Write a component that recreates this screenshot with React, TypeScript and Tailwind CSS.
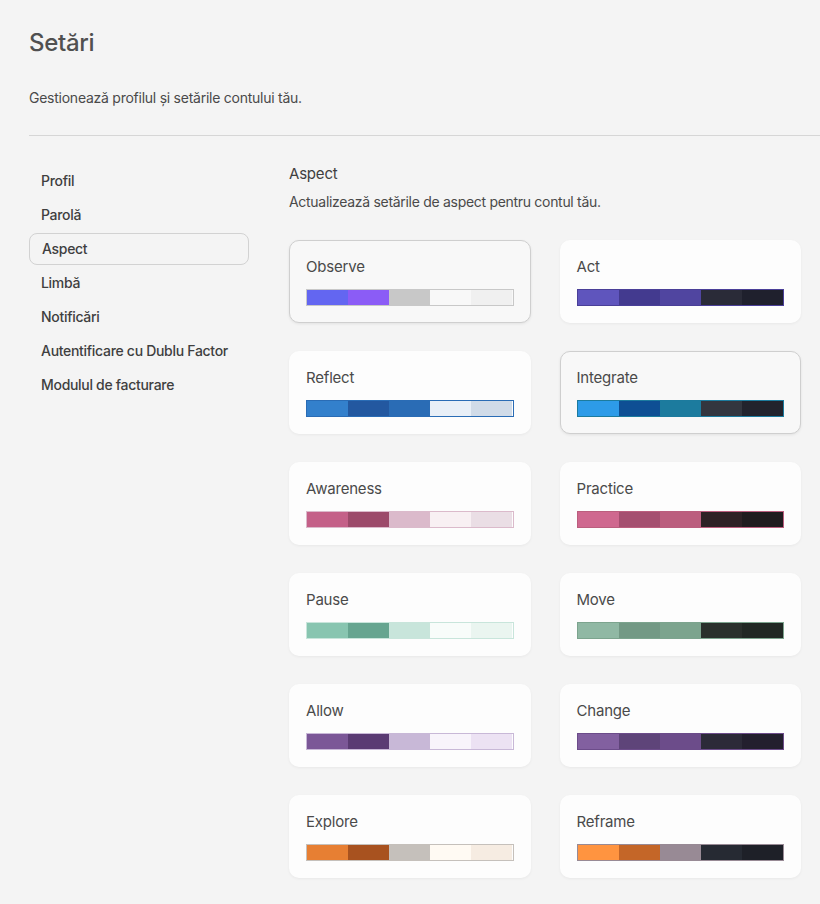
import React from "react";

type Theme = {
  name: string;
  colors: string[];
  border: string;
};

const themes: Theme[] = [
  { name: "Observe", colors: ["#6366f1", "#8b5cf6", "#c8c8c8", "#f8f8f8", "#f0f0f0"], border: "#c8c8c8" },
  { name: "Act", colors: ["#5f55bd", "#433a8f", "#5045a0", "#2a2b38", "#1f202d"], border: "#4a3f98" },
  { name: "Reflect", colors: ["#3380cc", "#2358a0", "#2a6cb5", "#e8eff7", "#d0dbe8"], border: "#2a6cb5" },
  { name: "Integrate", colors: ["#2d9be8", "#0e4f94", "#1c7b9e", "#33363f", "#22232d"], border: "#1c7b9e" },
  { name: "Awareness", colors: ["#c46088", "#9c4a6a", "#dbbacb", "#f8f0f3", "#eadee5"], border: "#dbbacb" },
  { name: "Practice", colors: ["#cf688f", "#a54f70", "#bb5e7e", "#2e2226", "#201c1f"], border: "#bb5e7e" },
  { name: "Pause", colors: ["#88c5b0", "#66a590", "#c8e5db", "#f8fcfa", "#eaf5f0"], border: "#c8e5db" },
  { name: "Move", colors: ["#90b8a4", "#739985", "#7ca48e", "#2a302c", "#212824"], border: "#7ca48e" },
  { name: "Allow", colors: ["#7b5797", "#5a3b73", "#c8b8d7", "#f8f4fb", "#ece2f3"], border: "#c8b8d7" },
  { name: "Change", colors: ["#8260a0", "#5e4479", "#6c4c8a", "#2c2a38", "#231f2e"], border: "#6c4c8a" },
  { name: "Explore", colors: ["#e77f33", "#a8521f", "#c5c0bb", "#fffaf3", "#f6ece2"], border: "#c5c0bb" },
  { name: "Reframe", colors: ["#ff9440", "#c46628", "#988a95", "#262a33", "#1e2028"], border: "#988a95" },
];

const highlighted = ["Observe", "Integrate"];

const navItems = [
  "Profil",
  "Parolă",
  "Aspect",
  "Limbă",
  "Notificări",
  "Autentificare cu Dublu Factor",
  "Modulul de facturare",
];

function ThemeCard({ theme }: { theme: Theme }) {
  const active = highlighted.includes(theme.name);
  return (
    <button
      className={
        active
          ? "text-left rounded-[10px] border border-[#cfcfcf] bg-[#f8f8f8] p-4 shadow-[0_1px_3px_rgba(0,0,0,0.08)]"
          : "text-left rounded-[10px] border border-transparent bg-[#fdfdfd] p-4 shadow-[0_1px_3px_rgba(0,0,0,0.05)]"
      }
    >
      <div className="text-[15px] leading-5 tracking-[-0.2px] text-[#4a4a4a]">{theme.name}</div>
      {/* paleta */}
      <div className="mt-3 flex h-[17px] border" style={{ borderColor: theme.border }}>
        {theme.colors.map((c, i) => (
          <div key={i} className="flex-1" style={{ backgroundColor: c }} />
        ))}
      </div>
    </button>
  );
}

export default function App() {
  return (
    <div className="min-h-screen bg-[#f4f4f4] pl-[29px] pt-[27px] pb-10 font-['Inter','Liberation_Sans',sans-serif] text-[#4a4a4a]">
      <h1 className="text-2xl leading-8 font-medium tracking-[-0.3px] text-[#505050]">Setări</h1>
      <p className="mt-[29px] text-sm leading-5 tracking-[-0.25px] text-[#4a4a4a]">
        Gestionează profilul și setările contului tău.
      </p>

      <div className="mt-[27px] h-px bg-[#d6d6d6]" />

      <div className="flex gap-10 pr-[19px]">
        {/* ===== MENIU ===== */}
        <nav className="mt-[29px] flex w-[220px] shrink-0 flex-col gap-[2px]">
          {navItems.map((item) => (
            <div
              key={item}
              className={
                item === "Aspect"
                  ? "flex h-8 items-center whitespace-nowrap rounded-lg border border-[#d2d2d2] px-[12px] text-sm font-medium tracking-[-0.3px] text-[#3f3f3f]"
                  : "flex h-8 items-center whitespace-nowrap rounded-lg px-3 text-sm font-medium tracking-[-0.3px] text-[#3f3f3f]"
              }
            >
              {item}
            </div>
          ))}
        </nav>

        {/* ===== CONTINUT ===== */}
        <section className="mt-[28px] flex-1">
          <h2 className="text-[15px] leading-5 tracking-[-0.2px] text-[#3f3f3f]">Aspect</h2>
          <p className="mt-2 text-sm leading-5 tracking-[-0.3px] text-[#4a4a4a]">
            Actualizează setările de aspect pentru contul tău.
          </p>

          <div className="mt-[28px] grid grid-cols-2 gap-x-[29px] gap-y-[28px]">
            {themes.map((t) => (
              <ThemeCard key={t.name} theme={t} />
            ))}
          </div>
        </section>
      </div>
    </div>
  );
}
